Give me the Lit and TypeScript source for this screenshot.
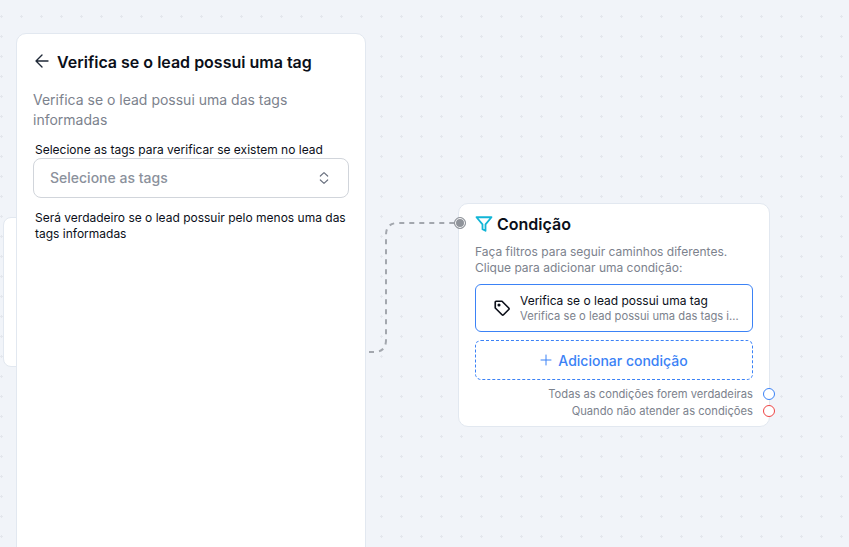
import { LitElement, html, css, svg } from "lit";
import { customElement } from "lit/decorators.js";

@customElement("app-root")
export class AppRoot extends LitElement {
  static styles = css`
    :host {
      display: block;
      position: relative;
      width: 849px;
      height: 547px;
      overflow: hidden;
      font-family: Inter, "Noto Sans", sans-serif;
      background-color: #f1f4f9;
      background-image: radial-gradient(circle at 1.5px 1.5px, #e4e7ed 1px, transparent 1.1px);
      background-size: 20px 20px;
      background-position: 0px 15px;
    }
    .ghost {
      position: absolute;
      left: 3px;
      top: 217px;
      width: 40px;
      height: 150px;
      box-sizing: border-box;
      background: #fff;
      border: 1px solid #e2e8f0;
      border-radius: 8px;
    }
    .panel {
      position: absolute;
      left: 16px;
      top: 33px;
      width: 350px;
      height: 540px;
      box-sizing: border-box;
      background: #fff;
      border: 1px solid #e2e8f0;
      border-radius: 10px;
      padding: 16px 16px;
      display: flex;
      flex-direction: column;
    }
    .head {
      display: flex;
      align-items: center;
      gap: 6px;
      height: 24px;
      margin-bottom: 16px;
    }
    .back { width: 18px; height: 18px; flex: none; color: #1f2937; margin-top: -2px; }
    h1 {
      margin: 0;
      font-size: 16px;
      line-height: 24px;
      font-weight: 600;
      color: #0b0f19;
    }
    .desc {
      margin: 0 0 12px;
      font-size: 14px;
      line-height: 20px;
      color: #7c828d;
    }
    .label, .hint {
      margin: 0;
      padding-left: 2px;
      font-size: 12px;
      line-height: 16px;
      color: #0b0f19;
    }
    .select {
      height: 40px;
      box-sizing: border-box;
      border: 1px solid #d1d5db;
      border-radius: 8px;
      display: flex;
      align-items: center;
      justify-content: space-between;
      padding: 0 16px;
      font-size: 14px;
      font-weight: 500;
      color: #8b919c;
    }
    .select span { margin-top: -2px; }
    .select svg { width: 16px; height: 16px; color: #6b7280; }
    .hint { margin-top: 12px; }
    .node {
      position: absolute;
      left: 458px;
      top: 203px;
      width: 312px;
      height: 224px;
      box-sizing: border-box;
      background: #fff;
      border: 1px solid #e2e8f0;
      border-radius: 10px;
      padding: 8px 16px 0;
      display: flex;
      flex-direction: column;
    }
    .node-head {
      display: flex;
      align-items: center;
      gap: 4px;
      height: 24px;
      margin-bottom: 8px;
    }
    .node-head svg { width: 18px; height: 18px; color: #12b5d6; flex: none; }
    .node-head span { font-size: 16px; line-height: 24px; font-weight: 600; color: #0b0f19; }
    .node-desc { font-size: 12px; line-height: 16px; color: #7c828d; margin: 0 0 8px; }
    .cond {
      height: 48px;
      box-sizing: border-box;
      border: 1px solid #3b82f6;
      border-radius: 6px;
      display: flex;
      align-items: center;
      gap: 9px;
      padding: 0 12px 0 17px;
    }
    .cond svg { width: 18px; height: 18px; color: #0b0f19; flex: none; }
    .cond-text { min-width: 0; flex: 1; }
    .cond-title { font-size: 12px; line-height: 16px; color: #0b0f19; }
    .cond-sub {
      font-size: 11.2px;
      line-height: 15px;
      color: #7c828d;
      white-space: nowrap;
      overflow: hidden;
      text-overflow: ellipsis;
    }
    .add {
      margin-top: 8px;
      height: 40px;
      box-sizing: border-box;
      border: 1px dashed #3b82f6;
      border-radius: 6px;
      display: flex;
      align-items: center;
      justify-content: center;
      gap: 6px;
      color: #3b82f6;
      font-size: 14px;
      font-weight: 500;
    }
    .add svg { width: 12px; height: 12px; }
    .out {
      text-align: right;
      font-size: 11.2px;
      line-height: 17px;
      color: #7c828d;
    }
    .out.first { margin-top: 6px; }
    .port {
      position: absolute;
      width: 12px;
      height: 12px;
      box-sizing: border-box;
      border-radius: 50%;
      background: #fff;
      border: 1.5px solid #3b82f6;
    }
    .port.blue { left: 763px; top: 388px; }
    .port.red { left: 763px; top: 405px; border-color: #ef4444; }
    .port.in {
      left: 454px;
      top: 217px;
      background: #8f939a;
      border: 1px solid #8f939a;
      box-shadow: inset 0 0 0 1px #fff;
    }
    .wire { position: absolute; left: 0; top: 0; width: 849px; height: 547px; pointer-events: none; }
  `;

  render() {
    return html`
      <div class="ghost"></div>
      <svg class="wire" viewBox="0 0 849 547" fill="none">
        ${svg`<path d="M369 352 H374 Q386 352 386 340 V235 Q386 223 398 223 H455" stroke="#a3a7ae" stroke-width="2" stroke-dasharray="5 5"/>`}
      </svg>
      <section class="panel">
        <div class="head">
          <svg class="back" viewBox="0 0 24 24" fill="none" stroke="currentColor" stroke-width="1.8" stroke-linecap="round" stroke-linejoin="round"><path d="M20 12H4M12 4l-8 8 8 8"/></svg>
          <h1>Verifica se o lead possui uma tag</h1>
        </div>
        <p class="desc">Verifica se o lead possui uma das tags informadas</p>
        <p class="label">Selecione as tags para verificar se existem no lead</p>
        <div class="select">
          <span>Selecione as tags</span>
          <svg viewBox="0 0 24 24" fill="none" stroke="currentColor" stroke-width="1.8" stroke-linecap="round" stroke-linejoin="round"><path d="M6.5 9l5.5-5 5.5 5M6.5 15l5.5 5 5.5-5"/></svg>
        </div>
        <p class="hint">Será verdadeiro se o lead possuir pelo menos uma das tags informadas</p>
      </section>
      <section class="node">
        <div class="node-head">
          <svg viewBox="0 0 24 24" fill="none" stroke="currentColor" stroke-width="2.4" stroke-linejoin="round"><path d="M22 3H2l8 9.46V19l4 2v-8.54z"/></svg>
          <span>Condição</span>
        </div>
        <p class="node-desc">Faça filtros para seguir caminhos diferentes.<br />Clique para adicionar uma condição:</p>
        <div class="cond">
          <svg viewBox="0 0 24 24" fill="none" stroke="currentColor" stroke-width="2.2" stroke-linejoin="round" stroke-linecap="round"><path d="M12 3H4a1 1 0 0 0-1 1v8l9 9a1.5 1.5 0 0 0 2 0l7-7a1.5 1.5 0 0 0 0-2z"/><circle cx="8" cy="8" r="1"/></svg>
          <div class="cond-text">
            <div class="cond-title">Verifica se o lead possui uma tag</div>
            <div class="cond-sub">Verifica se o lead possui uma das tags informadas</div>
          </div>
        </div>
        <div class="add">
          <svg viewBox="0 0 24 24" fill="none" stroke="currentColor" stroke-width="2" stroke-linecap="round"><path d="M12 2v20M2 12h20"/></svg>
          <span>Adicionar condição</span>
        </div>
        <div class="out first">Todas as condições forem verdadeiras</div>
        <div class="out">Quando não atender as condições</div>
      </section>
      <span class="port in"></span>
      <span class="port blue"></span>
      <span class="port red"></span>
    `;
  }
}
